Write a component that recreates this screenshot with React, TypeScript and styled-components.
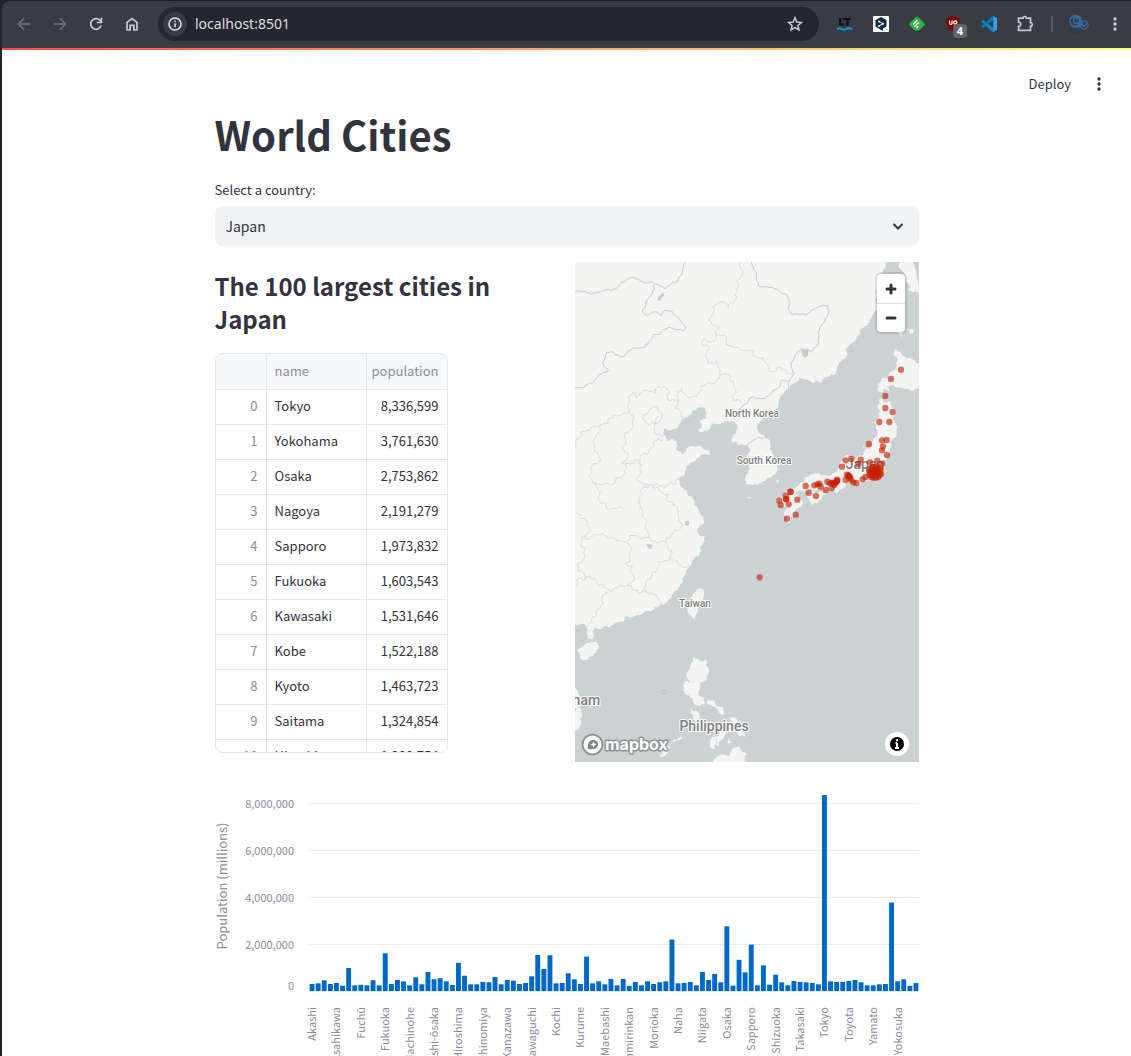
import React from "react";
import styled, { createGlobalStyle } from "styled-components";

const sans = `"Noto Sans CJK JP", "Noto Sans", sans-serif`;

const GlobalStyle = createGlobalStyle`
  * { box-sizing: border-box; }
  html, body, #root { height: 100%; }
  body { margin: 0; background: #ffffff; overflow: hidden; }
  button, select { font: inherit; color: inherit; }
  h1, h2 { margin: 0; }
`;

/* ---------- window and browser bar ---------- */

const Window = styled.div`
  display: flex;
  flex-direction: column;
  height: 100vh;
  padding-top: 1px;
  padding-left: 2px;
  background: #1e222b;
  font-family: ${sans};
  color: #31333f;
`;

const Toolbar = styled.nav`
  display: flex;
  flex: none;
  align-items: center;
  gap: 12px;
  height: 47px;
  padding: 0 4px 1px 10px;
  background: #3a3c44;
  border-top-left-radius: 8px;
`;

const IconButton = styled.button<{ $dim?: boolean }>`
  display: flex;
  flex: none;
  align-items: center;
  justify-content: center;
  position: relative;
  width: 24px;
  height: 24px;
  padding: 0;
  border: 0;
  background: none;
  color: ${(p) => (p.$dim ? "#74767c" : "#c8cacf")};
`;

const AddressBar = styled.div`
  display: flex;
  flex: 1;
  align-items: center;
  gap: 8px;
  height: 34px;
  margin-left: 2px;
  margin-right: 2px;
  padding: 0 12px 0 5px;
  border-radius: 17px;
  background: #24272e;
`;

const SiteInfo = styled(IconButton)`
  border-radius: 12px;
  background: #3a3c44;
  color: #e4e5e8;
`;

const Url = styled.input`
  flex: 1;
  min-width: 0;
  padding: 0;
  border: 0;
  outline: 0;
  background: none;
  color: #dcdde0;
  font: 14px/20px "Noto Sans", sans-serif;
`;

const Count = styled.span`
  position: absolute;
  right: -2px;
  bottom: -2px;
  width: 14px;
  height: 14px;
  border-radius: 4px;
  background: #636466;
  color: #ffffff;
  font: bold 11px/14px "Noto Sans", sans-serif;
  text-align: center;
`;

const Separator = styled.span`
  flex: none;
  width: 2px;
  height: 16px;
  margin: 0 2px;
  background: #55575e;
`;

/* ---------- page ---------- */

const Page = styled.div`
  flex: 1;
  min-height: 0;
  overflow: hidden;
  background: #ffffff;
`;

const Decoration = styled.div`
  height: 2px;
  background: linear-gradient(90deg, #ff4b4b, #fffd80);
`;

const Header = styled.header`
  display: flex;
  justify-content: flex-end;
  align-items: center;
  gap: 16px;
  height: 60px;
  padding: 8px 20px 0 0;
`;

const DeployButton = styled.button`
  padding: 0;
  border: 0;
  background: none;
  font-size: 13px;
  line-height: 20px;
`;

const MenuButton = styled(IconButton)`
  color: #31333f;
`;

const Main = styled.main`
  display: flex;
  flex-direction: column;
  gap: 16px;
  width: 100%;
  max-width: 704px;
  margin: 0 auto;
`;

const Title = styled.h1`
  font-size: 40px;
  line-height: 48px;
  font-weight: 700;
`;

const Field = styled.div`
  display: flex;
  flex-direction: column;
  gap: 6px;
  padding-top: 6px;
`;

const Label = styled.label`
  font-size: 13px;
  line-height: 20px;
`;

const SelectBox = styled.div`
  position: relative;
  display: flex;
  svg {
    position: absolute;
    right: 14px;
    top: 13px;
    pointer-events: none;
  }
`;

const Select = styled.select`
  appearance: none;
  flex: 1;
  height: 40px;
  padding: 0 40px 0 11px;
  border: 0;
  border-radius: 8px;
  background: #f0f2f6;
  font-size: 14px;
  line-height: 24px;
`;

const Columns = styled.div`
  display: grid;
  grid-template-columns: 1fr 1fr;
  gap: 16px;
`;

const Subtitle = styled.h2`
  padding: 7px 0 18px;
  font-size: 24px;
  line-height: 33px;
  font-weight: 600;
`;

const TableFrame = styled.div`
  width: 233px;
  height: 400px;
  overflow: hidden;
  border: 1px solid #e6e7ea;
  border-radius: 8px;
`;

const Table = styled.table`
  width: 100%;
  table-layout: fixed;
  border-collapse: separate;
  border-spacing: 0;
  font-size: 13px;
  line-height: 20px;
`;

const Cell = styled.td<{ $right?: boolean; $muted?: boolean; $width?: number }>`
  width: ${(p) => (p.$width ? `${p.$width}px` : "auto")};
  height: 35px;
  padding: ${(p) => (p.$right ? "0 8px 2px 4px" : "0 8px 2px")};
  border-right: 1px solid #e6e7ea;
  border-bottom: 1px solid #e6e7ea;
  text-align: ${(p) => (p.$right ? "right" : "left")};
  color: ${(p) => (p.$muted ? "#8b8d96" : "#31333f")};
  font-weight: 400;
  white-space: nowrap;
  &:last-child { border-right: 0; }
`;

const HeadCell = styled(Cell)`
  height: 36px;
  background: #f8f9fb;
`;

const MapFrame = styled.div`
  position: relative;
  height: 500px;
  overflow: hidden;
  background: #cad2d3;
`;

const MapSvg = styled.svg`
  display: block;
  width: 100%;
  height: 100%;
`;

const ZoomControl = styled.div`
  position: absolute;
  top: 12px;
  right: 14px;
  display: flex;
  flex-direction: column;
  border-radius: 4px;
  background: #ffffff;
  box-shadow: 0 0 0 2px rgba(0, 0, 0, 0.1);
`;

const ZoomButton = styled.button`
  display: flex;
  align-items: center;
  justify-content: center;
  width: 28px;
  height: 29px;
  padding: 0;
  border: 0;
  background: none;
  & + & { border-top: 1px solid #dddddd; }
`;

const Attribution = styled.button`
  position: absolute;
  right: 10px;
  bottom: 6px;
  width: 24px;
  height: 24px;
  padding: 0;
  border: 0;
  border-radius: 12px;
  background: #ffffff;
  svg { display: block; }
`;

const ChartSvg = styled.svg`
  display: block;
  width: 100%;
  height: auto;
  font-family: ${sans};
`;

/* ---------- data ---------- */

const cities: [string, string][] = [
  ["Tokyo", "8,336,599"],
  ["Yokohama", "3,761,630"],
  ["Osaka", "2,753,862"],
  ["Nagoya", "2,191,279"],
  ["Sapporo", "1,973,832"],
  ["Fukuoka", "1,603,543"],
  ["Kawasaki", "1,531,646"],
  ["Kobe", "1,522,188"],
  ["Kyoto", "1,463,723"],
  ["Saitama", "1,324,854"],
  ["Hiroshima", "1,200,754"],
];

/* populations in thousands, cities in alphabetical order */
const populations = [
  300, 325, 455, 300, 340, 225, 980, 240, 265, 240, 455, 240, 1604, 300, 470, 410, 240, 580, 285, 810,
  500, 545, 410, 255, 1201, 650, 285, 285, 385, 370, 596, 285, 470, 440, 298, 340, 624, 1532, 936, 1522,
  326, 340, 752, 496, 298, 1464, 326, 411, 284, 511, 241, 511, 220, 383, 241, 411, 298, 369, 411, 2191,
  326, 340, 383, 241, 808, 468, 723, 369, 2754, 227, 1325, 794, 1974, 241, 1092, 270, 695, 369, 241, 425,
  383, 369, 340, 284, 8337, 411, 383, 383, 425, 468, 369, 241, 241, 284, 298, 3762, 411, 496, 220, 340,
];

const barLabels = [
  "Akashi", "Asahikawa", "Fuchū", "Fukuoka", "Hachinohe", "Higashi-ōsaka", "Hiroshima", "Ichinomiya",
  "Kanazawa", "Kawaguchi", "Kochi", "Kurume", "Maebashi", "Minamirinkan", "Morioka", "Naha", "Niigata",
  "Osaka", "Sapporo", "Shizuoka", "Takasaki", "Tokyo", "Toyota", "Yamato", "Yokosuka",
];

/* Map geometry is stored on a grid of three units to a pixel. */
const land = [
  // mainland
  "-30,-30 940,-30 932,0 920,39 905,139 890,164 873,191 855,214 840,239 815,269 795,299 785,319 760,344 740,359 710,364 700,354 675,344 667,359 645,374 615,409 610,434 580,464 555,479 545,499 560,519 585,549 603,589 605,629 590,644 560,659 540,667 515,669 510,651 520,629 517,599 524,570 520,551 510,551 490,549 485,539 470,539 475,519 488,499 485,487 465,479 455,476 415,484 385,509 368,509 380,499 375,479 395,454 390,439 370,435 355,444 345,459 320,474 310,494 290,504 270,499 265,519 275,534 305,539 303,559 320,576 335,559 355,552 385,562 405,564 403,579 375,584 355,599 330,629 310,649 315,669 335,684 350,704 357,725 370,745 385,764 387,784 370,799 357,811 370,814 390,822 388,839 380,869 370,882 350,904 342,919 330,939 320,964 310,979 290,1004 255,1029 230,1047 195,1059 165,1066 150,1064 145,1079 115,1089 85,1094 60,1099 53,1109 55,1129 40,1131 35,1114 35,1096 0,1089 -30,1085",
  // Hainan, Vietnam, Taiwan
  "35,1144 65,1141 72,1151 55,1179 35,1194 15,1189 7,1164",
  "-10,1275 0,1279 10,1289 10,1324 22,1354 20,1389 0,1409 -10,1412",
  "380,979 387,984 380,1024 355,1072 345,1059 337,1039 350,1004 365,984",
  // Philippines
  "355,1186 370,1192 395,1194 395,1214 402,1229 395,1254 375,1262 375,1284 370,1299 390,1324 375,1332 355,1326 353,1309 335,1299 328,1259 345,1264 345,1214",
  "395,1319 415,1315 440,1334 450,1359 440,1359 425,1339 400,1329",
  "345,1339 365,1346 375,1369 365,1379 355,1360",
  "325,1414 310,1434 275,1474 255,1484 285,1449 310,1429",
  "410,1424 425,1439 422,1464 405,1449",
  "435,1404 455,1410 430,1455 425,1450",
  "460,1365 485,1372 500,1400 512,1424 490,1420 475,1395",
  "460,1430 470,1440 455,1450",
  "405,1510 425,1484 465,1479 485,1454 495,1452 515,1474 517,1510",
  // Hokkaido, Honshu, Shikoku, Kyushu
  "962,259 975,269 995,289 1032,304 1060,330 1050,380 1005,387 985,379 955,367 935,374 945,390 925,382 920,392 910,389 910,364 920,351 940,349 960,324 965,309 958,279",
  "915,409 925,419 945,417 950,434 960,454 965,499 955,529 945,559 935,589 927,619 925,639 915,651 895,649 880,654 865,659 845,669 830,659 813,659 807,679 785,694 770,684 750,684 730,679 705,681 685,689 660,694 645,691 655,679 675,664 695,644 720,634 750,639 770,639 785,629 795,609 805,589 820,579 825,594 845,589 865,579 885,559 895,529 903,499 907,469 915,444 913,419",
  "695,704 710,686 740,688 755,696 735,714 710,728",
  "605,714 625,694 650,684 670,699 680,714 678,734 660,754 645,784 635,774 627,754 640,734 615,729",
  // Sakhalin and small islands
  "975,-20 1015,-20 1025,50 1040,90 1020,88 1002,84 990,60 985,30",
  "970,211 985,205 980,229",
  "1000,200 1015,203 1012,215",
  "860,559 867,545 868,557",
  "512,706 530,704 525,710",
  "604,660 609,650 608,665",
  "562,945 564,945 564,947",
  "604,876 606,876 606,878",
  "634,810 636,810 636,812",
];

const lakes = [
  "247,114 263,92 268,99 253,117",
  "678,262 700,262 700,279 690,287 682,279",
  "213,847 233,849 228,862",
  "330,776 342,776 340,791 330,789",
];

const nationalBorders = [
  "0,87 30,89 50,96 90,84 125,79 140,61 170,46 190,52 215,62 230,59 270,80 290,62 310,57 313,44 325,14 330,0",
  "235,67 213,119 213,134 202,147 215,161 230,151 247,151 257,162 270,145 290,147 315,174 330,192 328,206 295,199 260,209 255,217 235,219 220,244 200,257 175,257 150,282 120,277 110,269 95,271 83,299 100,326 70,341 55,361 30,374 0,375",
  "530,0 545,34 553,74 580,77 615,89 640,109 640,139 650,159 695,159 710,144 735,134 757,131 757,164 735,194 730,229 710,271 680,259 660,279 650,299 657,334 645,354 640,379",
  "645,357 620,354 615,374 590,394 565,409 555,409 535,404 515,424 500,437 485,460",
  "515,551 535,534 570,527 575,520",
];

const provinceBorders = [
  "495,0 505,29 485,59 480,99 465,124 460,139 455,126 400,174 415,189 435,194 425,204 423,219 445,219 450,244 475,254 495,262 510,264 535,264 550,289 570,299 580,324 600,329 610,314 635,329 653,334",
  "423,219 410,239 385,229 380,241 393,249 390,279 400,304 425,294 435,339 465,349 475,374 500,424",
  "435,339 425,359 395,364 335,404 320,379 310,389 310,419 285,417 270,374 247,374 240,394 185,409 175,389 160,409 163,444 115,459 100,484 50,494 15,529 0,557",
  "310,419 300,439 320,454 325,469",
  "235,434 255,449 260,469 250,484 215,484 203,469 220,449 235,434",
  "250,464 240,489 245,519 265,524",
  "163,444 173,479 150,529 160,579 150,634 55,664 70,579 65,519 80,489",
  "150,604 200,611 197,584 225,559 265,534",
  "200,611 185,647 200,664 225,669 260,669 280,669 310,651",
  "225,669 200,694 190,724 205,750 210,770 220,804 220,828",
  "55,664 70,714 95,739 145,744",
  "230,669 255,689 285,719 305,734 310,749 320,784 295,814 270,839 220,826",
  "0,749 30,774 40,794 20,824 25,894 30,954 5,954 0,975",
  "25,829 75,819 125,839 155,839 220,826",
  "155,844 165,879 150,904 160,974",
  "30,954 60,949 85,969 100,984 130,976 175,984 215,989 235,994 255,1029",
  "215,989 230,934 250,899 285,884 280,854 270,839",
  "285,884 295,899 340,914",
  "95,989 85,1024 65,1059 40,1094",
];

const dots: [number, number][] = [
  [978, 323], [948, 351], [931, 402], [931, 438], [953, 450], [913, 480], [943, 480], [882, 546], [921, 535],
  [935, 534], [924, 553], [921, 565], [936, 579], [812, 595], [829, 591], [857, 593], [801, 614], [907, 596],
  [923, 604], [850, 606], [885, 601], [692, 672], [718, 670], [727, 667], [733, 665], [737, 674], [753, 684],
  [770, 679], [701, 692], [723, 702], [667, 713], [647, 689], [646, 690], [632, 701], [633, 712], [634, 711],
  [613, 716], [617, 729], [641, 727], [757, 659], [765, 664], [773, 664], [780, 662], [785, 657], [787, 653],
  [778, 669], [775, 666], [783, 661], [770, 662], [786, 658], [812, 654], [816, 638], [820, 642], [821, 640],
  [823, 647], [828, 653], [825, 645], [835, 661], [844, 663], [863, 652], [871, 645], [636, 770], [662, 758],
  [554, 946],
  // Greater Tokyo
  [900, 631], [894, 625], [906, 625], [892, 632], [908, 634], [897, 640], [904, 642], [888, 640], [913, 640],
  [900, 616], [887, 620], [916, 629], [896, 647], [912, 617], [884, 631], [903, 647], [893, 615], [910, 645],
  [918, 636], [889, 645], [900, 626], [904, 636], [896, 634], [907, 614], [882, 625], [917, 622], [884, 639],
];

/* Splits each segment and pushes its midpoints sideways, for a ragged coast or border. */
function roughen(source: string, amount: number, close: boolean): string {
  const points = source.split(" ").map((pair) => pair.split(",").map(Number));
  if (close) points.push(points[0]);
  let seed = points.length * 31 + Math.abs(Math.round(points[0][0] + points[0][1]));
  const next = () => {
    seed = (seed * 1103515245 + 12345) % 2147483648;
    return seed / 2147483648 - 0.5;
  };
  const out: string[] = [points[0].join(",")];
  const split = (a: number[], b: number[], depth: number) => {
    const dx = b[0] - a[0];
    const dy = b[1] - a[1];
    const length = Math.hypot(dx, dy);
    if (depth === 0 || length < 7 || length > 300) {
      out.push(`${b[0].toFixed(1)},${b[1].toFixed(1)}`);
      return;
    }
    const k = next() * amount;
    const mid = [(a[0] + b[0]) / 2 - dy * k, (a[1] + b[1]) / 2 + dx * k];
    split(a, mid, depth - 1);
    split(mid, b, depth - 1);
  };
  for (let i = 1; i < points.length; i++) split(points[i - 1], points[i], 3);
  return "M" + out.join("L") + (close ? "Z" : "");
}

/* ---------- pieces ---------- */

const line = { fill: "none", stroke: "currentColor", strokeWidth: 2 };

function BrowserBar() {
  return (
    <Toolbar aria-label="Browser">
      <IconButton $dim aria-label="Back">
        <svg width="16" height="16" viewBox="0 0 16 16" {...line} strokeWidth={1.6}><path d="M14 8H3M8 2.5 2.5 8 8 13.5" /></svg>
      </IconButton>
      <IconButton $dim aria-label="Forward">
        <svg width="16" height="16" viewBox="0 0 16 16" {...line} strokeWidth={1.6}><path d="M2 8h11M8 2.5 13.5 8 8 13.5" /></svg>
      </IconButton>
      <IconButton aria-label="Reload">
        <svg width="16" height="16" viewBox="0 0 16 16" {...line} strokeWidth={1.7}>
          <path d="M13.1 9.6A5.3 5.3 0 1 1 11.8 4.2L13.5 6" /><path d="M13.4 1.8v4.7H8.7" />
        </svg>
      </IconButton>
      <IconButton aria-label="Home">
        <svg width="16" height="16" viewBox="0 0 16 16" {...line} strokeWidth={1.7}>
          <path d="M3 14V6.4L8 2.5l5 3.9V14H9.9V9.3H6.1V14Z" />
        </svg>
      </IconButton>
      <AddressBar>
        <SiteInfo aria-label="Site information">
          <svg width="16" height="16" viewBox="0 0 16 16" {...line} strokeWidth={1.5}>
            <circle cx="8" cy="8" r="6" /><path d="M8 7.2v4M8 4.4v1.6" />
          </svg>
        </SiteInfo>
        <Url aria-label="Address" defaultValue="localhost:8501" />
        <IconButton aria-label="Bookmark">
          <svg width="18" height="18" viewBox="0 0 18 18" {...line} strokeWidth={1.5}>
            <path d="m9 2.8 1.8 4.3 4.6.4-3.5 3 1.1 4.5L9 12.6 5 15l1.1-4.5-3.5-3 4.6-.4Z" />
          </svg>
        </IconButton>
      </AddressBar>
      <IconButton aria-label="Language checker">
        <svg width="16" height="16" viewBox="0 0 16 16" fill="none">
          <path d="M3 2v6.5h4.500M6 3h8M10.500 3v7" stroke="#111317" strokeWidth="2.2" />
          <path d="M0 13.500c1.500-1.500 3-1.500 4.500-.5s3 1 4.500 0 3-1.500 6.500 0" stroke="#0a9ad8" strokeWidth="2" />
        </svg>
      </IconButton>
      <IconButton aria-label="Translator">
        <svg width="16" height="16" viewBox="0 0 16 16">
          <rect width="16" height="16" rx="1" fill="#ffffff" />
          <path d="M8 1l5.500 3v6.500L10 12.500V15l-3.500-2L2.500 10.500V4Z" fill="#0f2b46" />
          <path d="M6 5.500 10 7.800 6 10" stroke="#ffffff" fill="none" />
          <circle cx="6" cy="5.500" r="1" fill="#fff" /><circle cx="10" cy="7.800" r="1" fill="#fff" /><circle cx="6" cy="10" r="1" fill="#fff" />
        </svg>
      </IconButton>
      <IconButton aria-label="Feed reader">
        <svg width="16" height="16" viewBox="0 0 16 16">
          <path d="M6.800 1a1.700 1.700 0 0 1 2.400 0l6 6a1.700 1.700 0 0 1 0 2.400L10 14.500H6L.8 9.400a1.700 1.700 0 0 1 0-2.400Z" fill="#2bb24c" />
          <path d="M4 8.500 8.300 4.300M5.500 10.500l4.300-4M7.500 12l1.800-1.800" stroke="#ffffff" strokeWidth="1.600" />
        </svg>
      </IconButton>
      <IconButton aria-label="Content blocker, 4 blocked">
        <svg width="16" height="16" viewBox="0 0 16 16">
          <path d="M8 0c2 1.200 4 1.400 6.500 1.500V7c0 4-2.500 6.500-6.500 8.500C4 13.500 1.500 11 1.500 7V1.500C4 1.400 6 1.200 8 0Z" fill="#800000" />
          <path d="M4.500 4.500V7q0 1.500 1.300 1.500T7 7V4.500" stroke="#ffffff" fill="none" strokeWidth="1.200" />
          <circle cx="10.300" cy="6.500" r="1.700" stroke="#ffffff" fill="none" strokeWidth="1.200" />
        </svg>
        <Count>4</Count>
      </IconButton>
      <IconButton aria-label="Editor">
        <svg width="16" height="16" viewBox="0 0 16 16">
          <path d="M0 5.200 1.700 3.800 12.500 12v3.800L11.500 16Z" fill="#0f83cc" />
          <path d="M0 10.800 11.500 0l1 .8V4L1.700 12.200Z" fill="#0a77bd" />
          <path d="M11.500 0 16 2v12l-4.500 2c.8-.6.8-1 .8-2V2c0-1 0-1.500-.8-2Z" fill="#2aa7f0" />
        </svg>
      </IconButton>
      <IconButton aria-label="Extensions">
        <svg width="18" height="18" viewBox="0 0 18 18" {...line} strokeWidth={1.7}>
          <path d="M2.500 3.200H7a1.700 1.700 0 0 1 3.400 0h4.100V7.700a1.700 1.700 0 0 1 0 3.400v4.300h-12v-4a2.200 2.200 0 0 0 0-4.400Z" />
        </svg>
      </IconButton>
      <Separator />
      <IconButton aria-label="Profile">
        <svg width="22" height="22" viewBox="0 0 22 22" fill="none" stroke="#356fa8" strokeWidth="1.300">
          <circle cx="7.500" cy="8" r="5.500" /><circle cx="8.500" cy="7.500" r="3" /><path d="M2 6c3-4 8-4 11-1M3 12c3 3 8 2 9-2" />
          <circle cx="16" cy="12" r="4" /><path d="M14 10c0 4 4 4 4 0M8 13c3 2 5 0 6-3" /><path d="M5 19h11" stroke="#2d3440" strokeDasharray="2 1" />
        </svg>
      </IconButton>
      <IconButton aria-label="Browser menu">
        <svg width="16" height="16" viewBox="0 0 16 16" fill="currentColor"><circle cx="8" cy="3" r="1.700" /><circle cx="8" cy="8" r="1.700" /><circle cx="8" cy="13" r="1.700" /></svg>
      </IconButton>
    </Toolbar>
  );
}

const MapLabel = styled.text<{ $size: number }>`
  font-family: Roboto, sans-serif;
  font-size: ${(p) => p.$size}px;
  font-weight: 500;
  fill: #7d7d7d;
  stroke: #ffffff;
  stroke-width: 2px;
  stroke-linejoin: round;
  paint-order: stroke;
  text-anchor: middle;
`;

const Wordmark = styled.text`
  font-family: Inter, sans-serif;
  font-size: 16px;
  font-weight: 700;
  fill: #ffffff;
  stroke: #8d9596;
  stroke-width: 3px;
  stroke-linejoin: round;
  paint-order: stroke;
`;

function CityMap() {
  return (
    <MapFrame>
      <MapSvg viewBox="0 0 344 500" preserveAspectRatio="xMidYMid slice" role="img" aria-label="Map of the cities">
        <g transform="scale(0.333333)">
          {land.map((shape) => <path key={shape} d={roughen(shape, 0.5, true)} fill="#f4f4f3" />)}
          {lakes.map((shape) => <path key={shape} d={roughen(shape, 0.3, true)} fill="#c4cdcf" />)}
          <g fill="none" strokeLinejoin="round">
            {provinceBorders.map((shape) => <path key={shape} d={roughen(shape, 0.7, false)} stroke="#d6d7d7" strokeWidth="2.600" />)}
            {nationalBorders.map((shape) => <path key={shape} d={roughen(shape, 0.3, false)} stroke="#bfc0c0" strokeWidth="2.600" />)}
            <circle cx="267" cy="1290" r="7" stroke="#b3babb" strokeWidth="2.400" />
          </g>
        </g>
        <MapLabel $size={10} x="177" y="155">North Korea</MapLabel>
        <MapLabel $size={10} x="189" y="202">South Korea</MapLabel>
        <MapLabel $size={10} x="120" y="345">Taiwan</MapLabel>
        <MapLabel $size={14} x="290" y="207">Japan</MapLabel>
        <MapLabel $size={14} x="139" y="469">Philippines</MapLabel>
        <MapLabel $size={14} x="-1" y="443">Vietnam</MapLabel>
        <g transform="scale(0.333333)" fill="#c81e00" fillOpacity="0.63">
          {dots.map(([x, y], i) => <circle key={i} cx={x} cy={y} r="9.500" />)}
        </g>
        <circle cx="17.500" cy="482.500" r="8.800" fill="#8d9596" fillOpacity="0.4" stroke="#8d9596" strokeWidth="4" />
        <circle cx="17.500" cy="482.500" r="9" fill="#ffffff" />
        <path d="M13 487c-.6-4 0-8.500 5-9 3 0 5 2 5 4.500 0 5-5.500 5-10 4.500Z" fill="#7f8889" />
        <path d="m18.500 479.500.9 2.100 2.100.9-2.100.9-.9 2.100-.9-2.100-2.100-.9 2.100-.9Z" fill="#ffffff" />
        <Wordmark x="30" y="488">mapbox</Wordmark>
      </MapSvg>
      <ZoomControl>
        <ZoomButton aria-label="Zoom in">
          <svg width="12" height="12" viewBox="0 0 12 12" stroke="#333333" strokeWidth="3" strokeLinecap="round"><path d="M2 6h8M6 2v8" /></svg>
        </ZoomButton>
        <ZoomButton aria-label="Zoom out">
          <svg width="12" height="12" viewBox="0 0 12 12" stroke="#333333" strokeWidth="3" strokeLinecap="round"><path d="M2 6h8" /></svg>
        </ZoomButton>
      </ZoomControl>
      <Attribution aria-label="Map attribution">
        <svg width="24" height="24" viewBox="0 0 24 24"><circle cx="12" cy="12" r="7" /><path d="M12 11v5M10.500 11H12M10 16h4M12 7.200v2" stroke="#ffffff" strokeWidth="2" /></svg>
      </Attribution>
    </MapFrame>
  );
}

const AxisText = styled.text<{ $size: number }>`
  font-size: ${(p) => p.$size}px;
  fill: #8b8d9b;
  text-anchor: ${(p) => (p.$size > 12 ? "middle" : "end")};
`;

const BASE = 213;
const PX_PER_MILLION = 23.5;
const STEP = 6.1;
const PLOT_LEFT = 94;

function PopulationChart() {
  return (
    <ChartSvg viewBox="0 0 704 320" role="img" aria-label="Population by city">
      {[2, 4, 6, 8].map((m) => {
        const y = Math.round(BASE - m * PX_PER_MILLION) + 0.5;
        return (
          <g key={m}>
            <line x1={PLOT_LEFT} x2="704" y1={y} y2={y} stroke="#e6eaf1" />
            <AxisText $size={11} x="79" y={y + 4}>{`${m},000,000`}</AxisText>
          </g>
        );
      })}
      <AxisText $size={11} x="79" y="212">0</AxisText>
      <line x1={PLOT_LEFT} x2="704" y1={BASE + 0.5} y2={BASE + 0.5} stroke="#e6eaf1" />
      {populations.map((p, i) => {
        const h = (p / 1000) * PX_PER_MILLION;
        return <rect key={i} x={PLOT_LEFT + 0.6 + i * STEP} y={BASE - h} width="4.9" height={h} fill="#0068c9" />;
      })}
      {barLabels.map((name, i) => (
        <AxisText key={name} $size={11} transform={`translate(${PLOT_LEFT + 7 + i * 4 * STEP} 229) rotate(-90)`}>{name}</AxisText>
      ))}
      <AxisText $size={13} transform="translate(12 108) rotate(-90)">Population (millions)</AxisText>
    </ChartSvg>
  );
}

export default function App() {
  return (
    <Window>
      <GlobalStyle />
      <BrowserBar />
      <Page>
        <Decoration />
        <Header>
          <DeployButton>Deploy</DeployButton>
          <MenuButton aria-label="App menu">
            <svg width="16" height="16" viewBox="0 0 16 16" fill="currentColor"><circle cx="8" cy="3" r="1.700" /><circle cx="8" cy="8" r="1.700" /><circle cx="8" cy="13" r="1.700" /></svg>
          </MenuButton>
        </Header>
        <Main>
          <Title>World Cities</Title>
          <Field>
            <Label htmlFor="country">Select a country:</Label>
            <SelectBox>
              <Select id="country" defaultValue="Japan"><option>Japan</option></Select>
              <svg width="14" height="14" viewBox="0 0 14 14" {...line}><path d="m2.500 5 4.500 4.500L11.500 5" /></svg>
            </SelectBox>
          </Field>
          <Columns>
            <section>
              <Subtitle>The 100 largest cities in Japan</Subtitle>
              <TableFrame>
                <Table>
                  <thead>
                    <tr>
                      <HeadCell as="th" $width={51} aria-label="index" />
                      <HeadCell as="th" $muted $width={100}>name</HeadCell>
                      <HeadCell as="th" $muted $right>population</HeadCell>
                    </tr>
                  </thead>
                  <tbody>
                    {cities.map(([name, population], i) => (
                      <tr key={name}>
                        <Cell $muted $right>{i}</Cell>
                        <Cell>{name}</Cell>
                        <Cell $right>{population}</Cell>
                      </tr>
                    ))}
                  </tbody>
                </Table>
              </TableFrame>
            </section>
            <CityMap />
          </Columns>
          <PopulationChart />
        </Main>
      </Page>
    </Window>
  );
}
